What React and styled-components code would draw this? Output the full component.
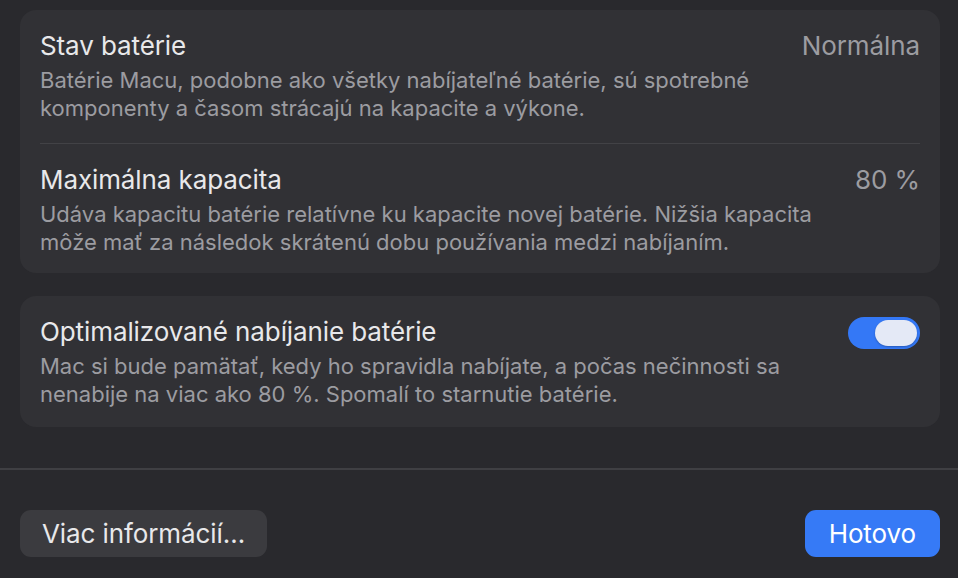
import React from "react";
import styled, { createGlobalStyle } from "styled-components";

const Global = createGlobalStyle`
  html, body { margin: 0; padding: 0; background: #29292d; }
  body { font-family: Inter, "Noto Sans", sans-serif; -webkit-font-smoothing: antialiased; }
`;

const Page = styled.div`
  width: 958px;
  height: 578px;
  background: #29292d;
  display: flex;
  flex-direction: column;
  overflow: hidden;
`;

const Content = styled.div`
  display: flex;
  flex-direction: column;
  gap: 23px;
  padding: 10px 18px 0 20px;
`;

const Card = styled.section`
  background: #313135;
  border-radius: 16px;
  padding: 0 20px;
  display: flex;
  flex-direction: column;
`;

const Row = styled.div`
  display: flex;
  align-items: flex-start;
  justify-content: space-between;
  padding: 22px 0 ${(p) => p.$pb || 20}px;
  border-top: ${(p) => (p.$divider ? "1px solid #424246" : "none")};
`;

const Texts = styled.div`
  display: flex;
  flex-direction: column;
  gap: 6px;
`;

const Title = styled.div`
  font-size: 26px;
  line-height: 28px;
  color: #e8e8ea;
  letter-spacing: -0.1px;
`;

const Desc = styled.div`
  font-size: 22px;
  line-height: 28px;
  color: #9c9ca1;
`;

const Value = styled.div`
  font-size: 26px;
  line-height: 28px;
  color: #9c9ca1;
  letter-spacing: -0.1px;
`;

const Track = styled.div`
  width: 72px;
  height: 32px;
  border-radius: 16px;
  background: #3478f6;
  display: flex;
  align-items: center;
  justify-content: flex-end;
  padding: 0 3px;
  box-sizing: border-box;
  flex-shrink: 0;
  margin-top: -1px;
`;

const Knob = styled.div`
  width: 42px;
  height: 26px;
  border-radius: 13px;
  background: #e4e9f6;
  box-shadow: 0 1px 2px rgba(0, 0, 0, 0.25);
`;

const Separator = styled.div`
  height: 2px;
  background: #3f3f43;
  margin-top: 41px;
`;

const Footer = styled.div`
  display: flex;
  justify-content: space-between;
  padding: 40px 18px 0 20px;
`;

const Button = styled.button`
  height: 47px;
  border: none;
  border-radius: 11px;
  font-family: Inter, "Noto Sans", sans-serif;
  font-size: 26px;
  letter-spacing: -0.1px;
  padding: 0 ${(p) => (p.$primary ? 24 : 22)}px;
  background: ${(p) => (p.$primary ? "#367af6" : "#3b3b3f")};
  color: ${(p) => (p.$primary ? "#ffffff" : "#e8e8ea")};
`;

export default function App() {
  return (
    <Page>
      <Global />
      <Content>
        <Card>
          <Row $pb={21}>
            <Texts>
              <Title>Stav batérie</Title>
              <Desc>
                Batérie Macu, podobne ako všetky nabíjateľné batérie, sú spotrebné
                <br />
                komponenty a časom strácajú na kapacite a výkone.
              </Desc>
            </Texts>
            <Value>Normálna</Value>
          </Row>
          <Row $divider $pb={17}>
            <Texts>
              <Title>Maximálna kapacita</Title>
              <Desc>
                Udáva kapacitu batérie relatívne ku kapacite novej batérie. Nižšia kapacita
                <br />
                môže mať za následok skrátenú dobu používania medzi nabíjaním.
              </Desc>
            </Texts>
            <Value>80 %</Value>
          </Row>
        </Card>
        <Card>
          <Row $pb={19}>
            <Texts>
              <Title>Optimalizované nabíjanie batérie</Title>
              <Desc>
                Mac si bude pamätať, kedy ho spravidla nabíjate, a počas nečinnosti sa
                <br />
                nenabije na viac ako 80 %. Spomalí to starnutie batérie.
              </Desc>
            </Texts>
            <Track>
              <Knob />
            </Track>
          </Row>
        </Card>
      </Content>
      <Separator />
      <Footer>
        <Button>Viac informácií…</Button>
        <Button $primary>Hotovo</Button>
      </Footer>
    </Page>
  );
}
